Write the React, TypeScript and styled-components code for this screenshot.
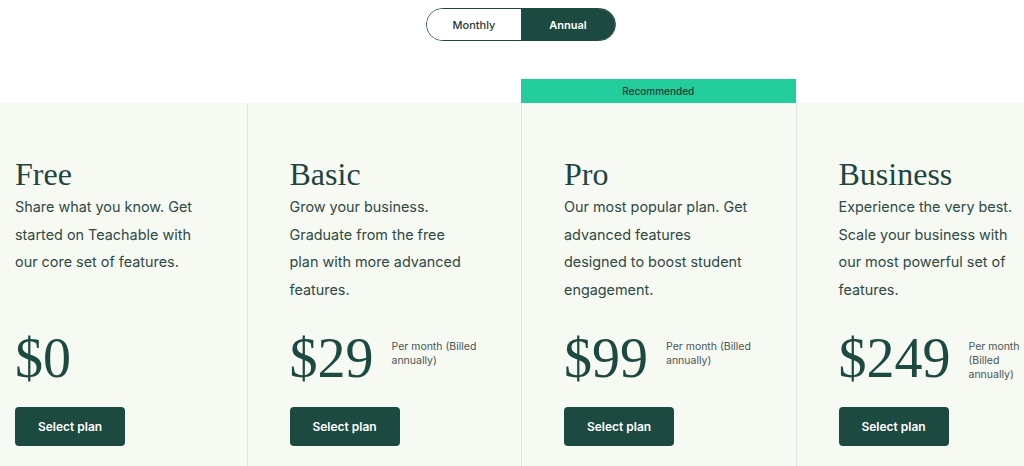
import React from "react";
import styled, { createGlobalStyle } from "styled-components";

const Global = createGlobalStyle`
  html, body { margin: 0; padding: 0; background: #fff; overflow: hidden; }
  body { font-family: Inter, "Noto Sans", sans-serif; }
`;

const DARK = "#1c4940";

const Page = styled.div`
  width: 1024px;
  height: 466px;
  overflow: hidden;
`;

const ToggleRow = styled.div`
  display: flex;
  justify-content: center;
  padding-top: 8px;
  padding-left: 18px;
`;

const Toggle = styled.div`
  display: flex;
  width: 190px;
  height: 33px;
  border: 1px solid ${DARK};
  border-radius: 17px;
  overflow: hidden;
  box-sizing: border-box;
`;

const ToggleOption = styled.div<{ $active?: boolean }>`
  flex: 1;
  display: flex;
  align-items: center;
  justify-content: center;
  font-size: 11px;
  font-weight: ${(p) => (p.$active ? 600 : 500)};
  color: ${(p) => (p.$active ? "#fff" : "#2b3a36")};
  background: ${(p) => (p.$active ? DARK : "#fff")};
`;

const Plans = styled.div`
  display: flex;
  margin-top: 38px;
  margin-left: -28px;
  width: 1100px;
`;

const Column = styled.div`
  width: 274.5px;
  flex: none;
  display: flex;
  flex-direction: column;
`;

const Badge = styled.div<{ $show?: boolean }>`
  height: 24px;
  display: flex;
  align-items: center;
  justify-content: center;
  font-size: 10px;
  font-weight: 500;
  color: #1d3c34;
  background: ${(p) => (p.$show ? "#22cc9b" : "transparent")};
`;

const Card = styled.div<{ $first?: boolean; $featured?: boolean }>`
  background: #f7f9f3;
  height: 400px;
  padding: 53px 47px 0 42px;
  box-sizing: border-box;
  border-left: 1px solid ${(p) => (p.$first ? "transparent" : "#dde8e0")};
  ${(p) => (p.$featured ? "border-right: 1px solid #dde8e0; margin-right: -1px;" : "")}
`;

const Title = styled.h2`
  margin: 0;
  font-family: "Liberation Serif", "Times New Roman", serif;
  font-weight: 400;
  font-size: 32px;
  line-height: 37px;
  color: #1e4640;
`;

const Description = styled.p`
  margin: 0;
  font-size: 14.4px;
  line-height: 27.5px;
  color: #2e4a45;
  height: 110px;
`;

const PriceRow = styled.div`
  display: flex;
  align-items: flex-start;
  margin-top: 27px;
  gap: 18px;
  margin-right: -47px;
`;

const Price = styled.div`
  font-family: "Liberation Serif", "Times New Roman", serif;
  font-size: 56px;
  line-height: 56px;
  color: ${DARK};
`;

const Billing = styled.div<{ $narrow?: boolean }>`
  font-size: 10.5px;
  line-height: 14px;
  color: #4a5553;
  max-width: ${(p) => (p.$narrow ? "56px" : "92px")};
  margin-top: 10px;
`;

const Button = styled.button`
  margin-top: 21px;
  width: 110px;
  height: 39px;
  border: none;
  border-radius: 4px;
  background: ${DARK};
  color: #fff;
  font-family: Inter, "Noto Sans", sans-serif;
  font-size: 12px;
  font-weight: 600;
  cursor: pointer;
`;

const plans = [
  {
    name: "Free",
    desc: "Share what you know. Get started on Teachable with our core set of features.",
    price: "$0",
    billing: null,
  },
  {
    name: "Basic",
    desc: "Grow your business. Graduate from the free plan with more advanced features.",
    price: "$29",
    billing: "Per month (Billed annually)",
  },
  {
    name: "Pro",
    desc: "Our most popular plan. Get advanced features designed to boost student engagement.",
    price: "$99",
    billing: "Per month (Billed annually)",
    featured: true,
  },
  {
    name: "Business",
    desc: "Experience the very best. Scale your business with our most powerful set of features.",
    price: "$249",
    billing: "Per month (Billed annually)",
    narrow: true,
  },
];

export default function App() {
  return (
    <Page>
      <Global />
      <ToggleRow>
        <Toggle>
          <ToggleOption>Monthly</ToggleOption>
          <ToggleOption $active>Annual</ToggleOption>
        </Toggle>
      </ToggleRow>
      <Plans>
        {plans.map((p, i) => (
          <Column key={p.name}>
            <Badge $show={p.featured}>{p.featured ? "Recommended" : ""}</Badge>
            <Card $first={i === 0} $featured={p.featured}>
              <Title>{p.name}</Title>
              <Description>{p.desc}</Description>
              <PriceRow>
                <Price>{p.price}</Price>
                {p.billing && <Billing $narrow={p.narrow}>{p.billing}</Billing>}
              </PriceRow>
              <Button>Select plan</Button>
            </Card>
          </Column>
        ))}
      </Plans>
    </Page>
  );
}
